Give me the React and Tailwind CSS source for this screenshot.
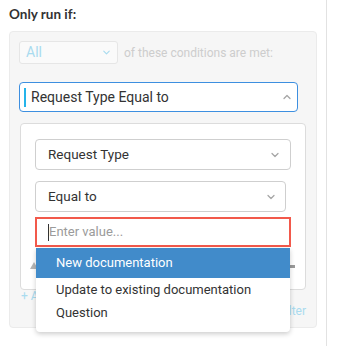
import { ChevronDown, ChevronUp } from "lucide-react";

const SelectBox = ({ label, className = "", chevronClass = "" }) => (
  <div
    className={`flex items-center justify-between h-[31px] bg-white border border-[#cfcfcf] rounded-[4px] pl-[12px] ${className}`}
  >
    <span className="text-[13.5px] text-[#333]">{label}</span>
    <ChevronDown size={12} strokeWidth={2.5} className={`text-[#a6a6a6] ${chevronClass}`} />
  </div>
);

const App = () => {
  return (
    <div
      className="relative w-[337px] h-[346px] bg-white overflow-hidden"
      style={{ fontFamily: "Roboto, 'Liberation Sans', sans-serif" }}
    >
      {/* right divider */}
      <div className="absolute top-0 bottom-0 left-[326px] w-px bg-[#e2e2e2]" />

      <div className="pl-[9px] pt-[5px] w-[317px]">
        <h2
          className="text-[13.5px] font-bold text-[#333] leading-[18px]"
          style={{ fontFamily: "Lato, 'Open Sans', sans-serif" }}
        >
          Only run if:
        </h2>

        {/* conditions panel */}
        <div className="mt-[8px] h-[297px] bg-[#f6f6f6] border border-[#ebebeb] rounded-[4px] pt-[9px] pl-[9px]">
          <div className="flex items-center">
            <div className="flex items-center justify-between w-[99px] h-[23px] bg-[#fafafa] border border-[#e6e6e6] rounded-[3px] pl-[6px] pr-[5px]">
              <span className="text-[14px] text-[#a9dbef]">All</span>
              <ChevronDown size={11} strokeWidth={2.5} className="text-[#a9dbef]" />
            </div>
            <span className="ml-[6px] text-[12px] text-[#cdcdcd]">of these conditions are met:</span>
          </div>

          {/* active condition select */}
          <div className="mt-[18px] flex items-center justify-between w-[279px] h-[30px] bg-white border border-[#3d8fe0] rounded-[4px] pl-[4px] pr-[4px]">
            <div className="flex items-center">
              <div className="w-[2px] h-[19px] bg-[#25b4ea]" />
              <span className="ml-[5px] text-[14px] text-[#333]">Request Type Equal to</span>
            </div>
            <ChevronUp size={12} strokeWidth={2.5} className="text-[#a6a6a6]" />
          </div>

          {/* editor popover */}
          <div className="mt-[11px] ml-[1px] w-[286px] h-[167px] bg-white border border-[#dcdcdc] rounded-[4px] pt-[15px] pl-[14px] relative">
            <SelectBox label="Request Type" className="w-[256px]" chevronClass="mr-[9px]" />
            <SelectBox label="Equal to" className="w-[251px] mt-[11px]" chevronClass="mr-[8px]" />

            {/* row hidden behind the dropdown */}
            <div className="absolute left-[9px] top-[138px] w-0 h-0 border-l-[4px] border-r-[4px] border-b-[7px] border-l-transparent border-r-transparent border-b-[#b5b5b5]" />
            <div className="absolute left-[269px] top-[141px] w-[5px] h-[3px] bg-[#9a9a9a]" />

            <div className="relative mt-[5px] w-[256px]">
              <div className="flex items-center h-[30px] border-2 border-[#f2594b] pl-[11px]">
                <div className="w-px h-[17px] bg-[#333]" />
                <span className="text-[13px] text-[#9b9b9b]">Enter value...</span>
              </div>

              {/* options dropdown */}
              <div className="absolute left-[1px] top-[31px] w-[254px] h-[84px] bg-white rounded-b-[4px] shadow-[0_2px_5px_rgba(0,0,0,0.2)] z-10">
                <div className="h-[30px] flex items-center pl-[20px] bg-[#418bca] text-white text-[13px]">
                  New documentation
                </div>
                <div className="h-[23px] flex items-center pl-[20px] text-[13px] text-[#333]">
                  Update to existing documentation
                </div>
                <div className="h-[24px] flex items-center pl-[20px] text-[13px] text-[#333]">
                  Question
                </div>
              </div>
            </div>
          </div>

          <div className="flex justify-between w-[287px] text-[12px] text-[#a9dbef] leading-[14px]">
            <span className="ml-[2px] -mt-[1px]">+ Add condition</span>
            <span className="mt-[14px]">Remove filter</span>
          </div>
        </div>
      </div>
    </div>
  );
};

export default App;
